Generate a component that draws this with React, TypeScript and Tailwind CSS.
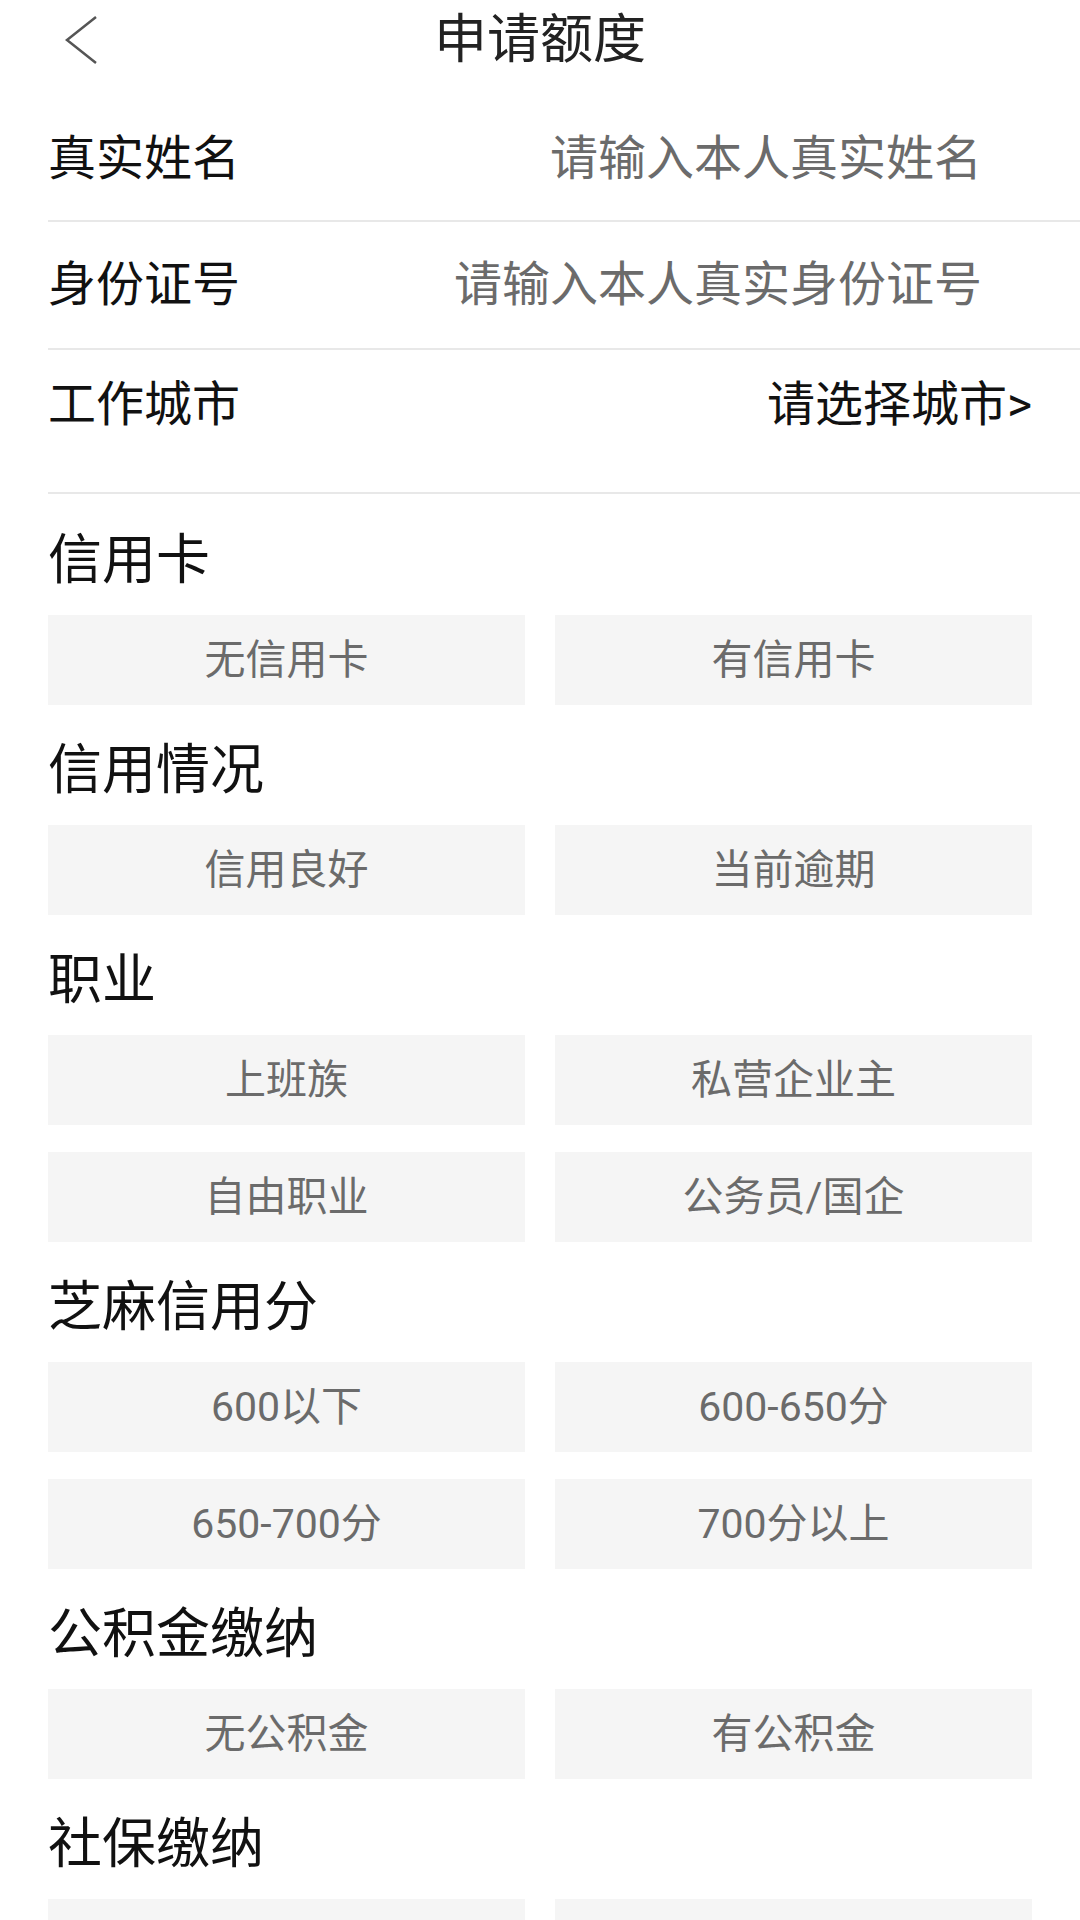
import React from "react";

const sections = [
  { title: "信用卡", options: ["无信用卡", "有信用卡"] },
  { title: "信用情况", options: ["信用良好", "当前逾期"] },
  { title: "职业", options: ["上班族", "私营企业主", "自由职业", "公务员/国企"] },
  { title: "芝麻信用分", options: ["600以下", "600-650分", "650-700分", "700分以上"] },
  { title: "公积金缴纳", options: ["无公积金", "有公积金"] },
  // options of this block fall below the fold
  { title: "社保缴纳", options: ["", " "] },
];

const font = { fontFamily: 'Roboto, "Noto Sans CJK SC", sans-serif' };

export default function App() {
  return (
    <div className="h-[1920px] w-[1080px] overflow-hidden bg-white" style={font}>
      {/* header */}
      <div className="grid h-[80px] grid-cols-[1fr_auto_1fr] items-center">
        <div className="pl-[64px]">
          <svg width="36" height="50" viewBox="0 0 36 50" fill="none">
            <polyline
              points="32,2 3,25 32,48"
              stroke="#555555"
              strokeWidth="2.5"
              strokeLinejoin="miter"
            />
          </svg>
        </div>
        <h1 className="text-[53px] leading-none text-[#222222]">申请额度</h1>
        <div />
      </div>

      {/* inputs */}
      <div className="ml-[48px]">
        <div className="flex h-[142px] items-start justify-between border-b-2 border-[#e8e8e8] pt-[55px] pr-[98px]">
          <span className="text-[48px] leading-none text-[#111111]">真实姓名</span>
          <span className="text-[48px] leading-none text-[#6b6b6b]">请输入本人真实姓名</span>
        </div>
        <div className="flex h-[128px] items-start justify-between border-b-2 border-[#e8e8e8] pt-[39px] pr-[98px]">
          <span className="text-[48px] leading-none text-[#111111]">身份证号</span>
          <span className="text-[48px] leading-none text-[#6b6b6b]">请输入本人真实身份证号</span>
        </div>
        <div className="flex h-[144px] items-start justify-between border-b-2 border-[#e8e8e8] pt-[31px] pr-[48px]">
          <span className="text-[48px] leading-none text-[#111111]">工作城市</span>
          <span className="text-[48px] leading-none text-[#111111]">请选择城市&gt;</span>
        </div>
      </div>

      {/* options */}
      <div className="flex flex-col gap-[39px] px-[48px] pt-[40px]">
        {sections.map((section) => (
          <div key={section.title}>
            <h2 className="text-[54px] leading-none text-[#111111]">{section.title}</h2>
            <div className="mt-[27px] grid grid-cols-2 gap-x-[30px] gap-y-[27px]">
              {section.options.map((option) => (
                <div
                  key={option}
                  className="flex h-[90px] items-center justify-center bg-[#f5f5f5] text-[41px] leading-none text-[#6b6b6b]"
                >
                  {option}
                </div>
              ))}
            </div>
          </div>
        ))}
      </div>
    </div>
  );
}
